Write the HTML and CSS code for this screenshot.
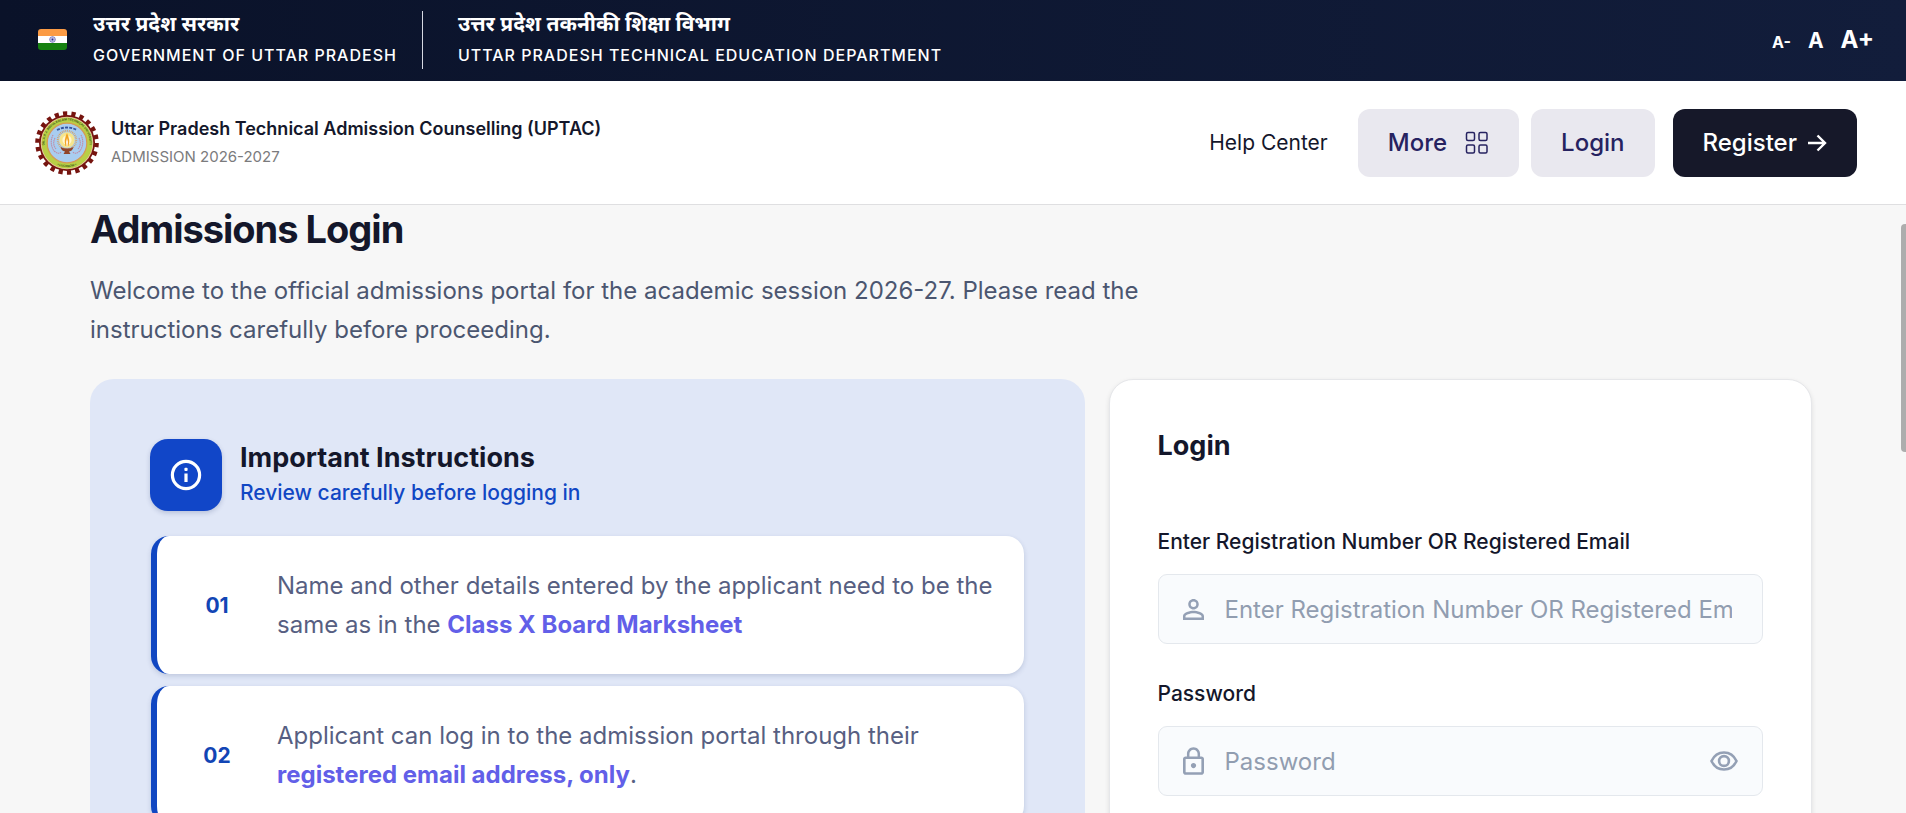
FILE: index.html
```html
<!DOCTYPE html>
<html lang="en">
<head>
<meta charset="utf-8">
<meta name="viewport" content="width=device-width, initial-scale=1">
<title>UPTAC Admissions Login</title>
<link rel="stylesheet" href="styles.css">
</head>
<body>
<div class="gov-bar">
  <svg class="flag" viewBox="0 0 29 21" role="img" aria-label="Flag of India">
    <defs><clipPath id="flag-clip"><rect width="29" height="21" rx="3"/></clipPath></defs>
    <g clip-path="url(#flag-clip)">
      <rect width="29" height="7" fill="#fb9b45"/>
      <rect y="7" width="29" height="7" fill="#fff"/>
      <rect y="14" width="29" height="7" fill="#168110"/>
    </g>
    <circle cx="14.5" cy="10.5" r="2.8" fill="#e4e4f4" stroke="#5b5bb0" stroke-width=".8"/>
    <path d="M14.5 7.7v5.600M11.700 10.500h5.600M12.500 8.500l4 4M16.500 8.500l-4 4" stroke="#7a7ac4" stroke-width=".4"/>
    <circle cx="14.500" cy="10.500" r=".9" fill="#2a2a90"/>
  </svg>
  <div class="gov-name">
    <span class="hindi" lang="hi">उत्तर प्रदेश सरकार</span>
    <span class="english">GOVERNMENT OF UTTAR PRADESH</span>
  </div>
  <div class="gov-name gov-dept">
    <span class="hindi" lang="hi">उत्तर प्रदेश तकनीकी शिक्षा विभाग</span>
    <span class="english">UTTAR PRADESH TECHNICAL EDUCATION DEPARTMENT</span>
  </div>
  <div class="text-size">
    <button type="button" class="size-small" aria-label="Smaller text">A-</button>
    <button type="button" class="size-normal" aria-label="Normal text">A</button>
    <button type="button" class="size-large" aria-label="Larger text">A+</button>
  </div>
</div>

<header class="site-header">
  <svg class="logo" viewBox="0 0 64 64" role="img" aria-label="University emblem">
    <defs>
      <path id="ring-top" d="M12.500 43.200 A22.500 22.500 0 1 1 51.500 43.200"/>
      <path id="ring-bottom" d="M21 53.500 A24.200 24.200 0 0 0 43 53.500"/>
    </defs>
    <circle cx="32" cy="32" r="29.500" fill="none" stroke="#76140f" stroke-width="4.600" stroke-dasharray="4.200 4.225"/>
    <circle cx="32" cy="32" r="28" fill="#76140f"/>
    <circle cx="32" cy="32" r="26.300" fill="#e9c9a0"/>
    <circle cx="32" cy="32" r="25.400" fill="#b9cf45"/>
    <circle cx="32" cy="32" r="19.800" fill="#a9cdf0" stroke="#d59a55" stroke-width="1.200"/>
    <text class="logo-text"><textPath href="#ring-top" startOffset="50%" text-anchor="middle">DR. A.P.J. ABDUL KALAM TECHNICAL UNIVERSITY</textPath></text>
    <text class="logo-text"><textPath href="#ring-bottom" startOffset="50%" text-anchor="middle">• LUCKNOW •</textPath></text>
    <g fill="none" stroke="#c08ba5" stroke-width="1.100" stroke-dasharray="1.500 .6">
      <path d="M18 24q-4 8 1 16q5 4 7 1M20 27q-3 6 1 11M46 24q4 8-1 16q-5 4-7 1M44 27q3 6-1 11"/>
    </g>
    <path d="M22 19q10-5 20 0" fill="none" stroke="#35549e" stroke-width="1.800" stroke-dasharray="3 1.200"/>
    <circle cx="32" cy="29" r="9.200" fill="none" stroke="#d9a05c" stroke-width="2" stroke-dasharray=".8 1"/>
    <circle cx="32" cy="29" r="7.700" fill="#f6e58c"/>
    <circle cx="32" cy="29" r="4.600" fill="#fff8d2"/>
    <path d="M32 22q3.500 7 1.500 13h-3q-2-6 1.500-13z" fill="#f2a321"/>
    <path d="M32 27q1.500 4 .5 8h-1q-1-4 .5-8z" fill="#fff"/>
    <path d="M25.500 36q6.500 3 13 0q-1 4-4.500 4.500l1.500 2.500h-7l1.500-2.500q-3.500-.5-4.500-4.500z" fill="#91452a"/>
  </svg>
  <div class="brand">
    <span class="brand-title">Uttar Pradesh Technical Admission Counselling (UPTAC)</span>
    <span class="brand-sub">ADMISSION 2026-2027</span>
  </div>
  <nav class="site-nav">
    <a class="help-link" href="#help">Help Center</a>
    <div class="nav-pair">
      <button type="button" class="btn btn-soft btn-more">More
        <svg class="icon-grid" viewBox="0 0 24 24" aria-hidden="true"><g fill="none" stroke="currentColor" stroke-width="1.500"><rect x="1.500" y="1.500" width="8" height="8" rx="1.500"/><rect x="14" y="1.500" width="8" height="8" rx="1.500"/><rect x="1.500" y="14" width="8" height="8" rx="1.500"/><rect x="14" y="14" width="8" height="8" rx="1.500"/></g></svg>
      </button>
      <a class="btn btn-soft" href="#login">Login</a>
    </div>
    <a class="btn btn-dark" href="#register">Register
      <svg class="icon-arrow" viewBox="0 0 20 20" aria-hidden="true"><path d="M1 10h17M10.500 2.500L18 10l-7.500 7.500" fill="none" stroke="currentColor" stroke-width="2.400"/></svg>
    </a>
  </nav>
</header>

<main class="page">
  <h1 class="page-title">Admissions Login</h1>
  <p class="page-intro">Welcome to the official admissions portal for the academic session 2026-27. Please read the instructions carefully before proceeding.</p>
  <div class="columns">
    <section class="instructions">
      <div class="instructions-head">
        <span class="info-badge">
          <svg viewBox="0 0 32 32" aria-hidden="true"><circle cx="16" cy="16" r="13.600" fill="none" stroke="#fff" stroke-width="3.200"/><path d="M16 14.500v8.500" stroke="#fff" stroke-width="3.200"/><rect x="14.400" y="8.800" width="3.200" height="3.200" rx="1" fill="#fff"/></svg>
        </span>
        <div>
          <h2 class="card-title">Important Instructions</h2>
          <p class="instructions-sub">Review carefully before logging in</p>
        </div>
      </div>
      <ol class="rules">
        <li class="rule"><span class="rule-number">01</span><p class="rule-text">Name and other details entered by the applicant need to be the same as in the <strong>Class X Board Marksheet</strong></p></li>
        <li class="rule"><span class="rule-number">02</span><p class="rule-text">Applicant can log in to the admission portal through their <strong>registered email address, only</strong>.</p></li>
      </ol>
    </section>
    <form class="login-card" id="login">
      <h2 class="card-title">Login</h2>
      <div class="field">
        <label for="user">Enter Registration Number OR Registered Email</label>
        <div class="control">
          <svg class="icon-field" viewBox="4 4 16 16" aria-hidden="true"><path fill="currentColor" d="M12 5.900a2.100 2.100 0 1 1 0 4.200 2.100 2.100 0 0 1 0-4.200m0 9c2.970 0 6.100 1.460 6.100 2.100v1.100H5.900V17c0-.64 3.130-2.100 6.100-2.100M12 4C9.790 4 8 5.790 8 8s1.790 4 4 4 4-1.790 4-4-1.790-4-4-4m0 9c-2.670 0-8 1.340-8 4v3h16v-3c0-2.660-5.330-4-8-4"/></svg>
          <input id="user" type="text" placeholder="Enter Registration Number OR Registered Email">
        </div>
      </div>
      <div class="field">
        <label for="password">Password</label>
        <div class="control">
          <svg class="icon-lock" viewBox="4 1 16 21" aria-hidden="true"><path fill="currentColor" d="M12 17c1.100 0 2-.9 2-2s-.9-2-2-2-2 .9-2 2 .9 2 2 2m6-9h-1V6c0-2.760-2.240-5-5-5S7 3.240 7 6v2H6c-1.100 0-2 .9-2 2v10c0 1.100.9 2 2 2h12c1.100 0 2-.9 2-2V10c0-1.100-.9-2-2-2M8.900 6c0-1.710 1.390-3.100 3.100-3.100s3.100 1.390 3.100 3.100v2H8.900zM18 20H6V10h12z"/></svg>
          <input id="password" type="password" placeholder="Password">
          <button type="button" class="reveal" aria-label="Show password">
            <svg viewBox="0 0 28 20" aria-hidden="true"><g fill="none" stroke="currentColor" stroke-width="2.600"><path d="M1.500 10C4 4.700 8.600 1.500 14 1.500S24 4.700 26.500 10C24 15.300 19.400 18.500 14 18.500S4 15.300 1.500 10z"/><circle cx="14" cy="10" r="4.900"/></g></svg>
          </button>
        </div>
      </div>
    </form>
  </div>
</main>
<div class="scroll-thumb"></div>
</body>
</html>
```
FILE: styles.css
```css
* { box-sizing: border-box; }

body {
  margin: 0;
  height: 100vh;
  overflow: hidden;
  background: #f7f7f7;
  color: #14172b;
  font-family: Inter, "Noto Sans", sans-serif;
  font-size: 24px;
}

h1, h2, p, ol { margin: 0; padding: 0; }
button, input { font: inherit; color: inherit; }
button { border: 0; padding: 0; background: none; cursor: pointer; }
a { color: inherit; text-decoration: none; }
svg { display: block; flex: none; }

/* Government strip */
.gov-bar {
  display: flex;
  align-items: center;
  height: 81px;
  padding: 0 32px 2px 38px;
  background: linear-gradient(90deg, #0a1229, #121d3b);
  color: #fff;
}
.flag { width: 29px; height: 21px; margin-right: 26px; }
.gov-name { display: flex; flex-direction: column; }
.gov-dept {
  margin-left: 25px;
  padding-left: 35px;
  border-left: 1px solid #d6d9e2;
}
.hindi {
  font-family: "Noto Sans Devanagari", "Noto Sans", sans-serif;
  font-size: 21px;
  font-weight: 700;
  line-height: 30px;
}
.english { font-size: 16px; font-weight: 500; line-height: 28px; letter-spacing: 1px; }
.text-size {
  display: flex;
  align-items: baseline;
  gap: 17px;
  margin-left: auto;
  font-weight: 700;
}
.size-small { font-size: 16px; }
.size-normal { font-size: 21px; }
.size-large { font-size: 24px; }

/* Site header */
.site-header {
  display: flex;
  align-items: center;
  height: 124px;
  padding: 0 49px 0 35px;
  background: #fff;
  border-bottom: 1px solid #dfdfe1;
}
.logo { width: 64px; height: 64px; margin-right: 12px; }
.logo-text { font-size: 3px; font-weight: 700; fill: #3d5a1c; }
.brand { display: flex; flex-direction: column; gap: 4px; }
.brand-title { font-size: 18px; font-weight: 600; line-height: 24px; }
.brand-sub { font-size: 15px; line-height: 24px; color: #7b7b7d; }
.site-nav { display: flex; align-items: center; margin-left: auto; gap: 18px; }
.nav-pair { display: flex; gap: 12px; }
.help-link { margin-right: 12px; font-size: 21px; }
.btn {
  display: flex;
  align-items: center;
  height: 68px;
  padding: 0 30px;
  border-radius: 12px;
  font-weight: 500;
}
.btn-soft { background: #e9e8ef; color: #262260; }
.btn-dark { background: #161829; color: #fff; gap: 10px; }
.btn-more { gap: 18px; }
.icon-grid { width: 24px; height: 24px; }
.icon-arrow { width: 20px; height: 20px; }

/* Page body */
.page { padding: 0 94px 60px 90px; }
.page-title { font-size: 38px; font-weight: 700; line-height: 48px; letter-spacing: -1px; }
.page-intro {
  max-width: 1100px;
  margin-top: 18px;
  line-height: 39px;
  color: #4b5670;
}
.columns {
  display: grid;
  grid-template-columns: repeat(12, 1fr);
  gap: 24px;
  margin-top: 30px;
}

.instructions {
  grid-column: span 7;
  padding: 60px;
  border-radius: 24px;
  background: #e0e7f7;
}
.instructions-head { display: flex; align-items: center; gap: 18px; }
.info-badge {
  display: grid;
  place-items: center;
  width: 72px;
  height: 72px;
  border-radius: 18px;
  background: #1146c8;
  box-shadow: 0 2px 5px rgba(20, 40, 100, .2);
}
.info-badge svg { width: 32px; height: 32px; }
.card-title { font-size: 27px; font-weight: 700; line-height: 36px; }
.instructions-sub { font-size: 21px; font-weight: 500; line-height: 34px; color: #1147c4; }

.rules {
  display: grid;
  gap: 12px;
  margin: 25px 1px 0;
  list-style: none;
}
.rule {
  display: flex;
  align-items: center;
  min-height: 138px;
  padding: 30px 24px 30px 30px;
  border-left: 6px solid #1147c2;
  border-radius: 18px;
  background: #fff;
  box-shadow: 0 2px 5px rgba(40, 60, 110, .18);
}
.rule-number {
  flex: none;
  width: 60px;
  margin-right: 30px;
  text-align: center;
  font-size: 21px;
  font-weight: 700;
  color: #1245b5;
}
.rule-text { line-height: 39px; color: #575f82; }
.rule-text strong { font-weight: 700; color: #625fe8; }

.login-card {
  grid-column: span 5;
  padding: 48px;
  border: 1px solid #e6e7ea;
  border-radius: 24px;
  background: #fff;
  box-shadow: 0 2px 5px rgba(0, 0, 0, .1);
}
.login-card .card-title { margin-bottom: 62px; }
.field { margin-bottom: 34px; }
.field label {
  display: block;
  margin-bottom: 16px;
  font-size: 21px;
  font-weight: 500;
  line-height: 32px;
}
.control {
  display: flex;
  align-items: center;
  height: 70px;
  padding: 0 24px;
  border: 1px solid #e4e8ed;
  border-radius: 9px;
  background: #f9fbfd;
  color: #94a0b5;
}
.control input {
  flex: 1;
  min-width: 0;
  margin: 0 6px 0 21px;
  padding: 0;
  border: 0;
  outline: 0;
  background: none;
}
.control input::placeholder { color: #919db0; opacity: 1; }
.icon-field { width: 21px; height: 21px; }
.icon-lock { width: 21px; height: 28px; }
.reveal svg { width: 28px; height: 20px; }

.scroll-thumb {
  position: absolute;
  top: 224px;
  right: 0;
  width: 5px;
  height: 228px;
  border-radius: 4px 0 0 4px;
  background: #adadad;
}
```
